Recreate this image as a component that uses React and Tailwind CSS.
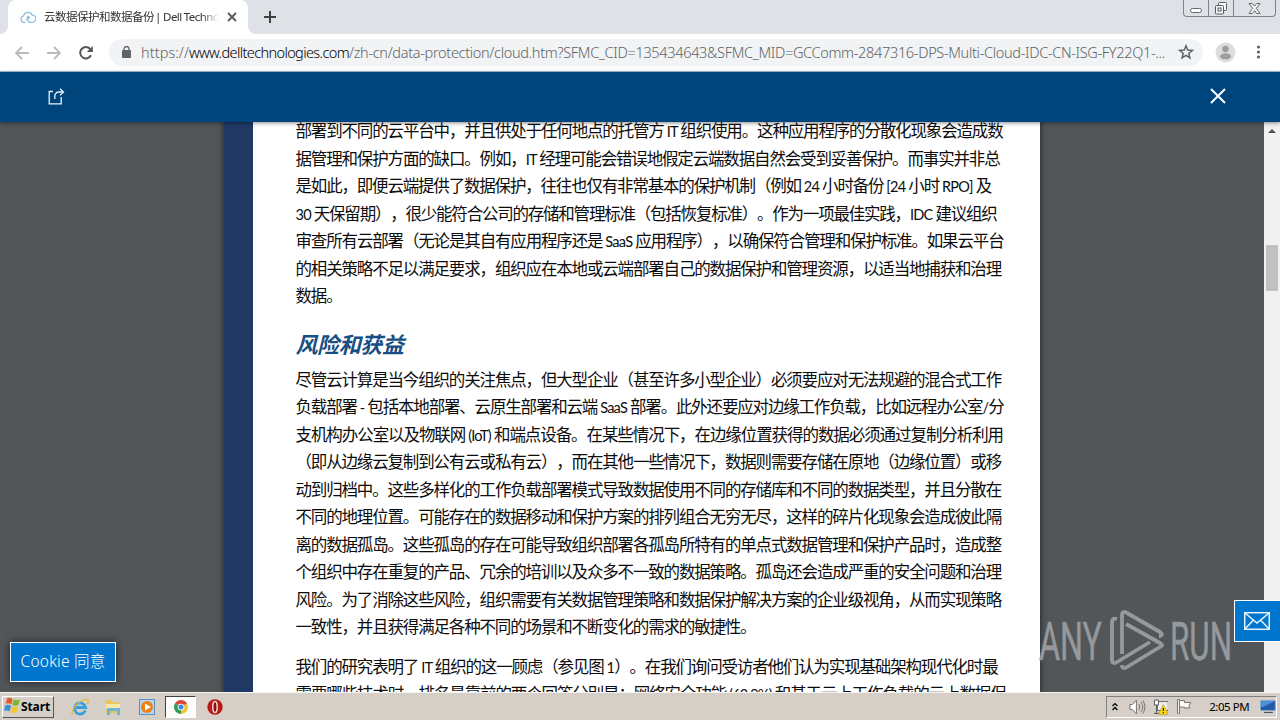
import { useLayoutEffect, useRef, useState } from "react";

const intro = [
  { text: "部署到不同的云平台中，并且供处于任何地点的托管方 IT 组织使用。这种应用程序的分散化现象会造成数", width: 707 },
  { text: "据管理和保护方面的缺口。例如，IT 经理可能会错误地假定云端数据自然会受到妥善保护。而事实并非总", width: 704 },
  { text: "是如此，即便云端提供了数据保护，往往也仅有非常基本的保护机制（例如 24 小时备份 [24 小时 RPO] 及", width: 695.5 },
  { text: "30 天保留期），很少能符合公司的存储和管理标准（包括恢复标准）。作为一项最佳实践，IDC 建议组织", width: 701 },
  { text: "审查所有云部署（无论是其自有应用程序还是 SaaS 应用程序），以确保符合管理和保护标准。如果云平台", width: 708 },
  { text: "的相关策略不足以满足要求，组织应在本地或云端部署自己的数据保护和管理资源，以适当地捕获和治理", width: 705.5 },
  { text: "数据。", width: 46 },
];

const risks = [
  { text: "尽管云计算是当今组织的关注焦点，但大型企业（甚至许多小型企业）必须要应对无法规避的混合式工作", width: 705.5 },
  { text: "负载部署 - 包括本地部署、云原生部署和云端 SaaS 部署。此外还要应对边缘工作负载，比如远程办公室/分", width: 708 },
  { text: "支机构办公室以及物联网 (IoT) 和端点设备。在某些情况下，在边缘位置获得的数据必须通过复制分析利用", width: 707.5 },
  { text: "（即从边缘云复制到公有云或私有云），而在其他一些情况下，数据则需要存储在原地（边缘位置）或移", width: 705.5 },
  { text: "动到归档中。这些多样化的工作负载部署模式导致数据使用不同的存储库和不同的数据类型，并且分散在", width: 705.5 },
  { text: "不同的地理位置。可能存在的数据移动和保护方案的排列组合无穷无尽，这样的碎片化现象会造成彼此隔", width: 705.5 },
  { text: "离的数据孤岛。这些孤岛的存在可能导致组织部署各孤岛所特有的单点式数据管理和保护产品时，造成整", width: 705.5 },
  { text: "个组织中存在重复的产品、冗余的培训以及众多不一致的数据策略。孤岛还会造成严重的安全问题和治理", width: 705.5 },
  { text: "风险。为了消除这些风险，组织需要有关数据管理策略和数据保护解决方案的企业级视角，从而实现策略", width: 705.5 },
  { text: "一致性，并且获得满足各种不同的场景和不断变化的需求的敏捷性。", width: 460 },
];

const research = [
  { text: "我们的研究表明了 IT 组织的这一顾虑（参见图 1）。在我们询问受访者他们认为实现基础架构现代化时最", width: 702 },
  { text: "需要哪些技术时，排名最靠前的两个回答分别是：网络安全功能 (62.9%) 和基于云上工作负载的云上数据保", width: 710 },
];

// Tracks its text in or out until it fills the given width.
// Children with their own tracking keep it, so the slope is measured.
function FitText({ width, className = "", children }) {
  const ref = useRef(null);
  const [spacing, setSpacing] = useState(0);

  useLayoutEffect(() => {
    const el = ref.current;
    el.style.letterSpacing = "0px";
    const natural = el.getBoundingClientRect().width;
    el.style.letterSpacing = "1px";
    const slope = el.getBoundingClientRect().width - natural;
    const next = (width - natural) / slope;
    el.style.letterSpacing = `${next}px`;
    setSpacing(next);
  }, [width]);

  return (
    <span
      ref={ref}
      className={`inline-block whitespace-pre ${className}`}
      style={{ letterSpacing: `${spacing}px` }}
    >
      {children}
    </span>
  );
}

function Line({ text, width }) {
  const parts = text.split(/([\x20-\x7e]+)/);
  return (
    <div className="h-[27.5px]">
      <FitText width={width}>
        {parts.map((part, i) =>
          i % 2 ? (
            <span key={i} className="text-[14.500px] tracking-[-0.75px]">{part}</span>
          ) : (
            part
          )
        )}
      </FitText>
    </div>
  );
}

function Paragraph({ lines }) {
  return (
    <div>
      {lines.map((line) => (
        <Line key={line.text} {...line} />
      ))}
    </div>
  );
}

function TabStrip() {
  return (
    <div className="flex h-[34px] shrink-0 justify-between bg-[#dee1e6]">
      <div className="flex">
        <div className="flex w-2 items-end bg-white">
          <div className="h-full w-2 rounded-br-lg bg-[#dee1e6]" />
        </div>
        <div className="flex w-60 items-center rounded-t-lg bg-white pl-3">
          <svg width="16" height="14" viewBox="0 0 16 14" fill="none" stroke="#8fbfe0" strokeWidth="1.3">
            <path d="M5.500 12.300H4A3.300 3.300 0 0 1 3.600 5.800A4.600 4.600 0 0 1 12.300 5.200A3.500 3.500 0 0 1 12.200 12.300H9.500L6 8.800" />
            <circle cx="8.300" cy="7.600" r="1" fill="#4a90c8" />
          </svg>
          <div className="ml-2 flex w-[175px] overflow-hidden text-[11.500px] leading-4 text-[#303236] [mask-image:linear-gradient(to_right,black_90%,transparent)]">
            <FitText width={110}>云数据保护和数据备份</FitText>
            <FitText width={64} className="ml-px">| Dell Techno</FitText>
          </div>
          <svg className="ml-2" width="10" height="10" viewBox="0 0 10 10" stroke="#55585c" strokeWidth="1.8">
            <path d="M1 1l8 8M9 1l-8 8" />
          </svg>
        </div>
        <div className="w-2 bg-white">
          <div className="h-full w-2 rounded-bl-lg bg-[#dee1e6]" />
        </div>
        <svg className="mt-[11px] ml-2" width="12" height="12" viewBox="0 0 12 12" stroke="#3c4043" strokeWidth="2">
          <path d="M6 0v12M0 6h12" />
        </svg>
      </div>
      <div className="mr-1 flex h-[17px] w-[93px] rounded-b border border-t-0 border-[#7f838b]">
        <div className="flex w-[25px] items-end justify-center border-r border-[#7f838b] pb-[3px]">
          <div className="h-[5px] w-3 rounded-sm border border-[#62666d] bg-white" />
        </div>
        <div className="flex w-[25px] items-center justify-center border-r border-[#7f838b]">
          <svg width="14" height="13" viewBox="0 0 14 13" fill="#f5f6f8" stroke="#55595f">
            <rect x="4.500" y="0.500" width="8" height="8" rx="1" />
            <rect x="1.500" y="3.500" width="8" height="8.500" rx="1" />
            <rect x="4" y="6" width="3" height="3" />
          </svg>
        </div>
        <div className="flex flex-1 items-center justify-center">
          <svg width="13" height="11" viewBox="0 0 13 11" fill="#fafafa" stroke="#62666d">
            <path d="M1 .5h3.300l2.200 2.700L8.700.5H12L8.300 5.300 12 10.500H8.700L6.500 7.600 4.300 10.500H1l3.700-5.200z" />
          </svg>
        </div>
      </div>
    </div>
  );
}

function Toolbar() {
  return (
    <div className="flex h-[38px] shrink-0 items-center border-b border-[#a9c0cf] bg-white">
      <div className="flex w-[109px] items-center gap-[18px] pl-[15px]">
        <svg width="14" height="14" viewBox="0 0 14 14" fill="none" stroke="#b9bbbd" strokeWidth="1.800">
          <path d="M14 7H1.500M7 1L1 7l6 6" />
        </svg>
        <svg width="14" height="14" viewBox="0 0 14 14" fill="none" stroke="#b9bbbd" strokeWidth="1.800">
          <path d="M0 7h12.500M7 1l6 6-6 6" />
        </svg>
        <svg width="14" height="14" viewBox="0 0 14 14" fill="none" stroke="#55585c" strokeWidth="2">
          <path d="M12 9.300A5.700 5.700 0 1 1 11.200 3L13 5" />
          <path d="M13.800 0v6H7.800z" fill="#55585c" stroke="none" />
        </svg>
      </div>
      <div className="flex h-[27px] w-[1094px] items-center rounded-full bg-[#f1f3f4] pl-[13px]">
        <svg className="-mt-0.5" width="9" height="12" viewBox="0 0 9 12" fill="#5f6368">
          <rect y="4" width="9" height="8" rx="1" />
          <path d="M2 5V3a2.500 2.500 0 0 1 5 0v2" fill="none" stroke="#5f6368" strokeWidth="1.300" />
        </svg>
        <div className="-mt-0.5 ml-[10px] flex w-[1037px] font-['Noto_Sans'] text-[14.500px] leading-5 font-light text-[#606468]">
          <FitText width={48}>https://</FitText>
          <FitText width={160} className="text-black">www.delltechnologies.com</FitText>
          <FitText width={816}>
            /zh-cn/data-protection/cloud.htm?SFMC_CID=135434643&SFMC_MID=GCComm-2847316-DPS-Multi-Cloud-IDC-CN-ISG-FY22Q1-...
          </FitText>
        </div>
        <svg className="-mt-0.5" width="16" height="16" viewBox="0 0 16 16" fill="none" stroke="#5f6368" strokeWidth="1.500">
          <path d="M8 1.800l1.700 4.300 4.600.3-3.500 3 1.100 4.500L8 11.400l-3.900 2.500 1.100-4.500-3.500-3 4.600-.3z" />
        </svg>
      </div>
      <svg className="-mt-px ml-3" width="21" height="21" viewBox="0 0 21 21">
        <circle cx="10.500" cy="10.500" r="10" fill="#dcdddd" />
        <circle cx="10.500" cy="7" r="3.200" fill="#9b9d9f" />
        <ellipse cx="10.500" cy="14.300" rx="5.500" ry="3" fill="#9b9d9f" />
      </svg>
      <svg className="-mt-px ml-5" width="5" height="14" viewBox="0 0 5 14" fill="#5f6368">
        <circle cx="2.500" cy="2" r="1.600" />
        <circle cx="2.500" cy="7" r="1.600" />
        <circle cx="2.500" cy="12" r="1.600" />
      </svg>
    </div>
  );
}

function SiteHeader() {
  return (
    <div className="z-10 flex h-[50px] shrink-0 items-center justify-between bg-[#00447c] pr-[54px] pb-0.5 pl-[48px] shadow-[0_1px_4px_rgba(0,0,0,0.45)]">
      <svg width="17" height="17" viewBox="0 0 17 17" fill="none" stroke="#e6f1f8" strokeWidth="1.300">
        <path d="M5 3.500H1.200v12.300h12V9M6.800 11V8a4 4 0 0 1 4-4H15" />
        <path d="M12 .8L15.500 4 12 7.200" />
      </svg>
      <svg width="16" height="16" viewBox="0 0 16 16" stroke="white" strokeWidth="2">
        <path d="M1 1l14 14M15 1L1 15" />
      </svg>
    </div>
  );
}

function Watermark() {
  return (
    <svg className="absolute top-[609px] left-[1036px]" width="198" height="64" viewBox="0 0 198 64">
      <g fill="#96999b" fontFamily="Roboto, sans-serif" fontSize="53" fontWeight="400" stroke="#96999b" strokeWidth="0.500">
        <text x="3" y="51" textLength="63" lengthAdjust="spacingAndGlyphs">ANY</text>
        <text x="134" y="51" textLength="62" lengthAdjust="spacingAndGlyphs">RUN</text>
      </g>
      <g fill="none" stroke="#96999b" strokeWidth="3.800" strokeLinejoin="round">
        <path d="M81 10c-3-1-5 0-5 3v38c0 3 2 4 5 2l33-20" />
        <path d="M86 45V6c0-3 2-4 5-2l33 19c3 2 2 4-1 4" />
        <path d="M90 15l34 19c3 2 3 2 0 4L91 58c-3 2-5 1-5-2" />
      </g>
    </svg>
  );
}

function Viewer() {
  return (
    <div className="flex min-h-0 flex-1 overflow-hidden bg-[#525659]">
      <div className="ml-[224px] flex w-[816px] shrink-0 bg-white shadow-[0_0_5px_1px_rgba(0,0,0,0.5)]">
        <div className="w-[29px] shrink-0 bg-[#1f3864]" />
        <div className="pl-[42.500px] font-['Lato','Noto_Sans_CJK_SC',sans-serif] text-[16.500px] leading-[27.500px] text-[#0c0c0c] [text-spacing-trim:space-all]">
          <div className="-mt-[4px]">
            <Paragraph lines={intro} />
            <h2 className="mt-[19px] h-[37px] text-[#174e83] italic">
              <FitText width={108} className="text-[22px] leading-[30px] font-bold">风险和获益</FitText>
            </h2>
            <Paragraph lines={risks} />
            <div className="mt-[12px]">
              <Paragraph lines={research} />
            </div>
          </div>
        </div>
      </div>
      <div className="flex-1" />
      <div className="flex w-4 flex-col items-center bg-[#f1f1f1]">
        <svg className="mt-[7px]" width="8" height="4" viewBox="0 0 8 4" fill="#505050">
          <path d="M0 4l4-4 4 4z" />
        </svg>
        <div className="mt-[112px] h-[46px] w-3 bg-[#c1c1c1]" />
      </div>
    </div>
  );
}

function QuickLaunch() {
  return (
    <div className="flex items-center">
      <svg className="ml-[17px]" width="18" height="18" viewBox="0 0 18 18" fill="none">
        <path d="M14.300 12.500A5.600 5.600 0 1 1 14.600 9.500H5" stroke="#36a0e0" strokeWidth="2.800" />
        <path d="M1.500 16.500C-1 11 12-1 17 2c1 1 0 3-1 4" stroke="#e3b93c" strokeWidth="1.300" />
      </svg>
      <svg className="ml-4" width="16" height="16" viewBox="0 0 16 16">
        <path d="M1 1h5l1 2h7v11H1z" fill="#e7c65c" />
        <path d="M1 5h14v5H1z" fill="#f7e8a6" />
        <path d="M2 9h13v7h-3v-4H5v4H2z" fill="#6eb5dc" />
      </svg>
      <svg className="ml-[18px]" width="17" height="16" viewBox="0 0 17 16">
        <rect x="0.500" y="0.500" width="15" height="15" fill="#b5d4ee" stroke="#5790c2" />
        <circle cx="8" cy="8" r="6" fill="#ee8116" />
        <path d="M6 4.500v7L12 8z" fill="white" />
      </svg>
      <div className="ml-[9px] flex h-[22px] w-[31px] items-center justify-center border border-t-[#404040] border-r-white border-b-white border-l-[#404040] bg-[#fdfdfc]">
        <svg width="14" height="14" viewBox="0 0 15 15">
          <path d="M7.500 7.500L1 3.800A7.500 7.500 0 0 1 14 3.800z" fill="#db4437" />
          <path d="M7.500 7.500L14 3.800A7.500 7.500 0 0 1 7.500 15z" fill="#f4c430" />
          <path d="M7.500 7.500V15A7.500 7.500 0 0 1 1 3.800z" fill="#2f9d58" />
          <circle cx="7.500" cy="7.500" r="3.600" fill="white" />
          <circle cx="7.500" cy="7.500" r="2.700" fill="#4285e8" />
        </svg>
      </div>
      <svg className="ml-[11px]" width="16" height="16" viewBox="0 0 16 16">
        <ellipse cx="8" cy="8" rx="7.700" ry="7.800" fill="#b91818" />
        <ellipse cx="8" cy="8" rx="2.200" ry="5.600" fill="#8b0e0e" stroke="#f3d9d9" strokeWidth="1.500" />
      </svg>
    </div>
  );
}

function Tray() {
  return (
    <div className="mr-[3px] flex h-[22px] w-[171px] items-center border border-t-[#808080] border-r-white border-b-white border-l-[#808080] pl-[5px]">
      <svg width="6" height="9" viewBox="0 0 6 9" fill="none" stroke="black" strokeWidth="1.300">
        <path d="M.5 4L3 1.500 5.500 4M.5 8L3 5.500 5.500 8" />
      </svg>
      <svg className="ml-[11px]" width="17" height="16" viewBox="0 0 17 16" fill="#fff" stroke="#77716b">
        <path d="M1 5.500h2.500l4-4.500v14l-4-4.500H1z" />
        <path d="M10 5q2 3 0 6M12 3q4 5 0 10M14 1.500q4.500 6.500 0 13" fill="none" />
      </svg>
      <svg className="ml-[7px]" width="16" height="16" viewBox="0 0 16 16">
        <rect x="4.500" y="2.500" width="11" height="9" fill="#eee" stroke="#6b6b6b" />
        <path d="M1.500 1h4v5h-4zM3.500 6v9M1 14.500h6" fill="#fff" stroke="#555" />
        <path d="M10.500 5.500l5 10h-10z" fill="#f8d71c" stroke="#b79500" strokeWidth="0.600" />
        <path d="M10.500 9v3M10.500 13v1.300" stroke="#222" strokeWidth="1.200" />
      </svg>
      <svg className="ml-2" width="16" height="15" viewBox="0 0 16 15" fill="#fff" stroke="#77716b">
        <path d="M1.500.5h2v14h-2z" />
        <path d="M3.500 1.500h5v2H15l-2 3 1 2.500H8.500v-1h-5z" />
      </svg>
      <FitText width={40} className="ml-[17px] font-['Noto_Sans'] text-[11.500px] leading-4 text-black">2:05 PM</FitText>
      <svg className="ml-[11px]" width="16" height="13" viewBox="0 0 16 13">
        <rect x="0.500" y="0.500" width="15" height="10" rx="1" fill="#225aa8" stroke="#84a9d2" />
        <path d="M1 1h14L3 7H1z" fill="#4b8fd6" />
        <path d="M4 12.500h9" stroke="#33475c" />
      </svg>
    </div>
  );
}

function Taskbar() {
  return (
    <div className="flex h-7 shrink-0 items-center justify-between border-t border-[#f6f4f0] bg-[#d5cfc7] pl-0.5">
      <div className="flex items-center">
        <div className="flex h-[22px] w-[52px] items-center border border-t-white border-r-[#555] border-b-[#555] border-l-white pl-px">
          <svg className="-mt-0.5" width="17" height="17" viewBox="0 0 16 16">
            <path d="M3 1q3-1 5 1L7 7Q4 5 1.500 6.500z" fill="#e5582a" />
            <path d="M9 2q3 2 6 0l-1.500 5.500Q10 9 8 7z" fill="#76b82a" />
            <path d="M1.200 8Q4 6.500 6.700 8.500L5.300 13.500Q3 12 0 13z" fill="#3a8fdb" />
            <path d="M7.700 9q3 1.500 5.700 0L12 14q-3 2-5.700 0z" fill="#f7c626" />
          </svg>
          <FitText width={29} className="font-['Noto_Sans'] text-[12px] leading-4 font-bold text-black">Start</FitText>
        </div>
        <QuickLaunch />
      </div>
      <Tray />
    </div>
  );
}

export default function App() {
  return (
    <div className="relative flex h-[720px] w-[1280px] flex-col overflow-hidden bg-white font-['Noto_Sans','Noto_Sans_CJK_SC',sans-serif]">
      <TabStrip />
      <Toolbar />
      <SiteHeader />
      <Viewer />
      <Taskbar />
      <Watermark />
      <button className="absolute top-[642px] left-[10px] flex h-10 w-[106px] items-center justify-center border border-white bg-[#0076ce] shadow-[0_0_8px_rgba(0,0,0,0.6)]">
        <FitText width={85} className="text-[15.500px] font-light text-white">Cookie 同意</FitText>
      </button>
      <button className="absolute top-[600px] left-[1234px] flex h-[42px] w-[47px] items-center border border-white bg-[#0076ce] pl-[9px]">
        <svg width="26" height="18" viewBox="0 0 26 18" fill="none" stroke="#e8f4fc" strokeWidth="1.500">
          <rect x="0.700" y="0.700" width="24.600" height="16.600" />
          <path d="M1 1l12 10L25 1M1 17l8.500-9M25 17l-8.500-9" />
        </svg>
      </button>
    </div>
  );
}
